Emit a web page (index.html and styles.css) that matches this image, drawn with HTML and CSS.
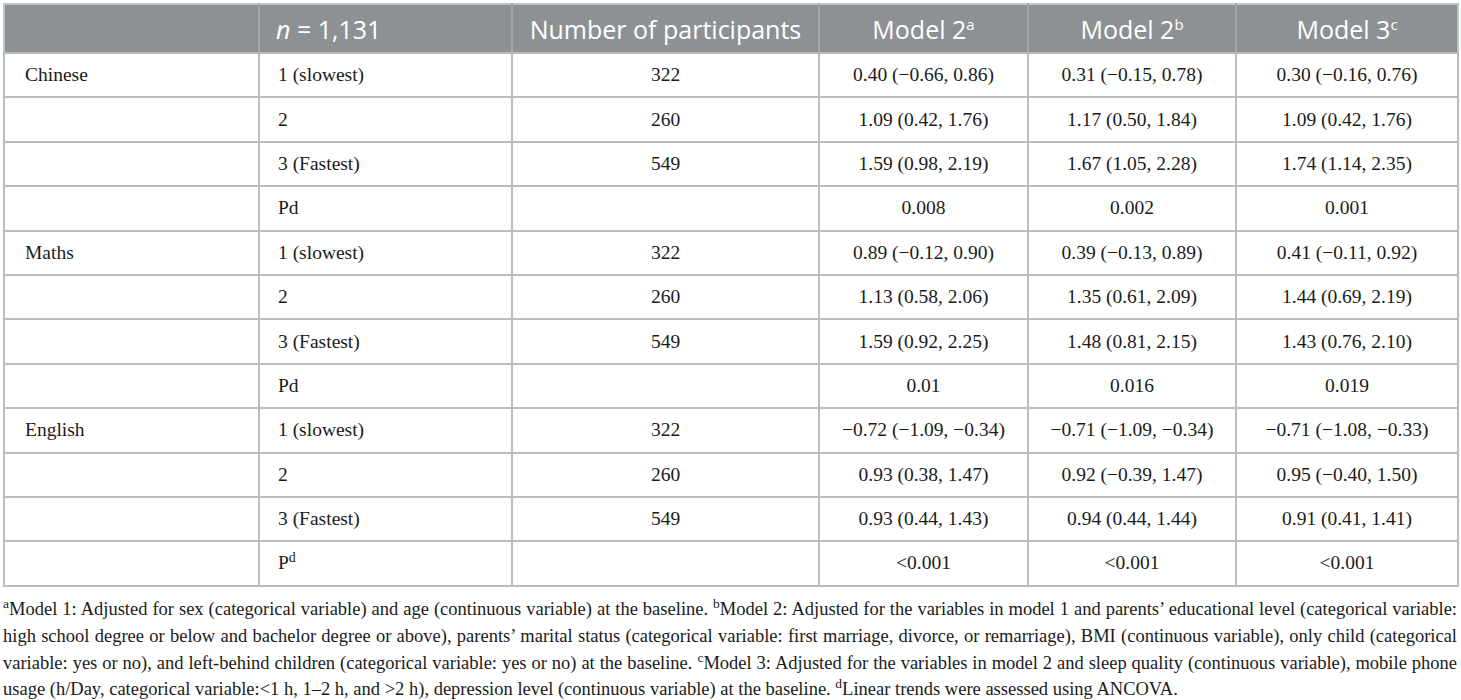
FILE: index.html
```html
<!DOCTYPE html>
<html lang="en">
<head>
<meta charset="utf-8">
<title>Table</title>
<link rel="stylesheet" href="styles.css">
</head>
<body>
<div class="page">
  <table class="data">
    <colgroup>
      <col class="c1"><col class="c2"><col class="c3"><col class="c4"><col class="c5"><col class="c6">
    </colgroup>
    <thead>
      <tr>
        <th></th>
        <th class="left"><i>n</i> = 1,131</th>
        <th>Number of participants</th>
        <th>Model 2<sup>a</sup></th>
        <th>Model 2<sup>b</sup></th>
        <th>Model 3<sup>c</sup></th>
      </tr>
    </thead>
    <tbody>
      <tr><td class="left">Chinese</td><td class="left">1 (slowest)</td><td>322</td><td>0.40 (−0.66, 0.86)</td><td>0.31 (−0.15, 0.78)</td><td>0.30 (−0.16, 0.76)</td></tr>
      <tr><td class="left"></td><td class="left">2</td><td>260</td><td>1.09 (0.42, 1.76)</td><td>1.17 (0.50, 1.84)</td><td>1.09 (0.42, 1.76)</td></tr>
      <tr><td class="left"></td><td class="left">3 (Fastest)</td><td>549</td><td>1.59 (0.98, 2.19)</td><td>1.67 (1.05, 2.28)</td><td>1.74 (1.14, 2.35)</td></tr>
      <tr><td class="left"></td><td class="left">Pd</td><td></td><td>0.008</td><td>0.002</td><td>0.001</td></tr>
      <tr><td class="left">Maths</td><td class="left">1 (slowest)</td><td>322</td><td>0.89 (−0.12, 0.90)</td><td>0.39 (−0.13, 0.89)</td><td>0.41 (−0.11, 0.92)</td></tr>
      <tr><td class="left"></td><td class="left">2</td><td>260</td><td>1.13 (0.58, 2.06)</td><td>1.35 (0.61, 2.09)</td><td>1.44 (0.69, 2.19)</td></tr>
      <tr><td class="left"></td><td class="left">3 (Fastest)</td><td>549</td><td>1.59 (0.92, 2.25)</td><td>1.48 (0.81, 2.15)</td><td>1.43 (0.76, 2.10)</td></tr>
      <tr><td class="left"></td><td class="left">Pd</td><td></td><td>0.01</td><td>0.016</td><td>0.019</td></tr>
      <tr><td class="left">English</td><td class="left">1 (slowest)</td><td>322</td><td>−0.72 (−1.09, −0.34)</td><td>−0.71 (−1.09, −0.34)</td><td>−0.71 (−1.08, −0.33)</td></tr>
      <tr><td class="left"></td><td class="left">2</td><td>260</td><td>0.93 (0.38, 1.47)</td><td>0.92 (−0.39, 1.47)</td><td>0.95 (−0.40, 1.50)</td></tr>
      <tr><td class="left"></td><td class="left">3 (Fastest)</td><td>549</td><td>0.93 (0.44, 1.43)</td><td>0.94 (0.44, 1.44)</td><td>0.91 (0.41, 1.41)</td></tr>
      <tr><td class="left"></td><td class="left">P<sup>d</sup></td><td></td><td>&lt;0.001</td><td>&lt;0.001</td><td>&lt;0.001</td></tr>
    </tbody>
  </table>
  <p class="notes"><sup>a</sup>Model 1: Adjusted for sex (categorical variable) and age (continuous variable) at the baseline. <sup>b</sup>Model 2: Adjusted for the variables in model 1 and parents’ educational level (categorical variable: high school degree or below and bachelor degree or above), parents’ marital status (categorical variable: first marriage, divorce, or remarriage), BMI (continuous variable), only child (categorical variable: yes or no), and left-behind children (categorical variable: yes or no) at the baseline. <sup>c</sup>Model 3: Adjusted for the variables in model 2 and sleep quality (continuous variable), mobile phone usage (h/Day, categorical variable:&lt;1 h, 1–2 h, and &gt;2 h), depression level (continuous variable) at the baseline. <sup>d</sup>Linear trends were assessed using ANCOVA.</p>
</div>
</body>
</html>
```

FILE: styles.css
```css
html, body {
  margin: 0;
  padding: 0;
  background: #ffffff;
}

.page {
  padding: 3px 4px 0 3px;
  font-family: "Liberation Serif", "Times New Roman", serif;
  color: #1a1a1a;
}

.data {
  width: 1454px;
  table-layout: fixed;
  border-collapse: collapse;
  border: 2px solid #b4cac2;
}

.c1 { width: 255px; }
.c2 { width: 253px; }
.c3 { width: 307px; }
.c4 { width: 209px; }
.c5 { width: 208px; }
.c6 { width: 222px; }

.data th {
  background: #8d9194;
  color: #ffffff;
  font-family: "Open Sans", "Noto Sans", sans-serif;
  font-weight: 400;
  font-size: 25px;
  height: 47px;
  padding: 0 16px;
  text-align: center;
  border-left: 2px solid #a3a6a8;
  border-bottom: 2px solid #b8b8b8;
  white-space: nowrap;
}

.data th:first-child {
  border-left: none;
}

.data th sup {
  font-size: 15px;
  line-height: 0;
  vertical-align: 9px;
}

.data td {
  font-size: 19.5px;
  height: 42.4px;
  padding: 0 18px;
  text-align: center;
  border: 2px solid #bdbdbd;
  white-space: nowrap;
}

.data td sup {
  font-size: 14px;
  line-height: 0;
  vertical-align: 7px;
}

.data .left {
  text-align: left;
}

.data td:first-child.left {
  padding-left: 20px;
}

.notes {
  margin: 9px 0 0 0;
  width: 1454px;
  font-size: 18.5px;
  line-height: 26.9px;
  text-align: justify;
  color: #1a1a1a;
}

.notes sup {
  font-size: 13.5px;
  line-height: 0;
  vertical-align: 7px;
}
```
